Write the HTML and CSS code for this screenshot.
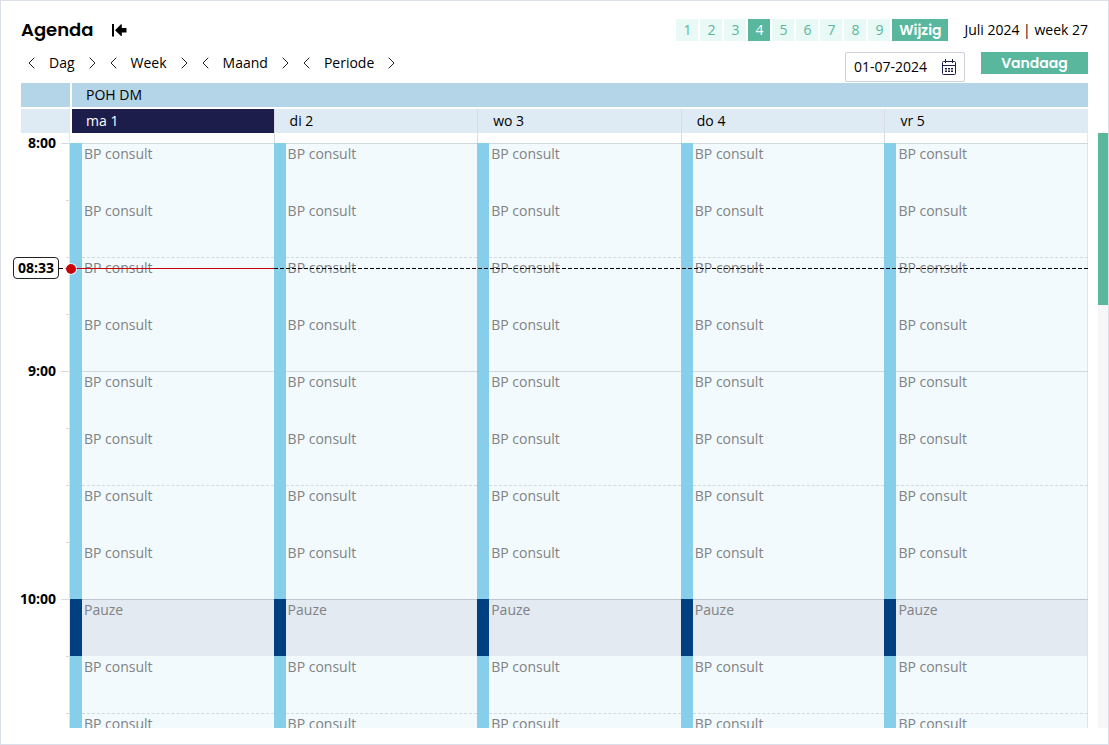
FILE: index.html
```html
<!DOCTYPE html>
<html lang="nl">
<head>
<meta charset="utf-8">
<meta name="viewport" content="width=device-width, initial-scale=1">
<title>Agenda</title>
<link rel="stylesheet" href="styles.css">
</head>
<body>
<main class="agenda">
  <header class="top">
    <div class="top-left">
      <div class="title-row">
        <h1 class="title">Agenda</h1>
        <button class="icon-button" type="button" aria-label="Paneel inklappen">
          <svg width="15" height="13" viewBox="0 0 15 13"><path d="M0 0h2v12.500H0z"/><path d="M3 6.200 9 .3h.8V4H14.500V8.500H9.800V12.100H9z"/></svg>
        </button>
      </div>
      <nav class="periods">
        <div class="period"><button class="step" type="button" aria-label="Vorige dag"><svg width="7" height="12" viewBox="0 0 7 12"><path d="M6.300 .7 1 6l5.300 5.300"/></svg></button><span>Dag</span><button class="step" type="button" aria-label="Volgende dag"><svg width="7" height="12" viewBox="0 0 7 12"><path d="M.7 .7 6 6 .7 11.300"/></svg></button></div>
        <div class="period"><button class="step" type="button" aria-label="Vorige week"><svg width="7" height="12" viewBox="0 0 7 12"><path d="M6.300 .7 1 6l5.300 5.300"/></svg></button><span>Week</span><button class="step" type="button" aria-label="Volgende week"><svg width="7" height="12" viewBox="0 0 7 12"><path d="M.7 .7 6 6 .7 11.300"/></svg></button></div>
        <div class="period"><button class="step" type="button" aria-label="Vorige maand"><svg width="7" height="12" viewBox="0 0 7 12"><path d="M6.300 .7 1 6l5.300 5.300"/></svg></button><span>Maand</span><button class="step" type="button" aria-label="Volgende maand"><svg width="7" height="12" viewBox="0 0 7 12"><path d="M.7 .7 6 6 .7 11.300"/></svg></button></div>
        <div class="period"><button class="step" type="button" aria-label="Vorige periode"><svg width="7" height="12" viewBox="0 0 7 12"><path d="M6.300 .7 1 6l5.300 5.300"/></svg></button><span>Periode</span><button class="step" type="button" aria-label="Volgende periode"><svg width="7" height="12" viewBox="0 0 7 12"><path d="M.7 .7 6 6 .7 11.300"/></svg></button></div>
      </nav>
    </div>
    <div class="top-right">
      <div class="views-row">
        <div class="views">
          <button class="view" type="button">1</button>
          <button class="view" type="button">2</button>
          <button class="view" type="button">3</button>
          <button class="view view-active" type="button">4</button>
          <button class="view" type="button">5</button>
          <button class="view" type="button">6</button>
          <button class="view" type="button">7</button>
          <button class="view" type="button">8</button>
          <button class="view" type="button">9</button>
          <button class="solid edit" type="button">Wijzig</button>
        </div>
        <span>Juli 2024 | week 27</span>
      </div>
      <div class="date-row">
        <div class="date">
          <input class="date-input" type="text" value="01-07-2024" aria-label="Datum">
          <button class="icon-button" type="button" aria-label="Kalender">
            <svg class="calendar" width="14" height="16" viewBox="0 0 14 16"><rect x=".5" y="2.500" width="13" height="13" rx="1"/><path d="M3.500 0v4M10.500 0v4M.5 6.500h13"/><path class="dots" d="M3 9h2v1.500H3zM6 9h2v1.500H6zM9 9h2v1.500H9zM3 11.500h2V13H3zM6 11.500h2V13H6zM9 11.500h2V13H9z"/></svg>
          </button>
        </div>
        <button class="solid today" type="button">Vandaag</button>
      </div>
    </div>
  </header>

  <div class="head">
    <div class="head-corner head-group"></div>
    <div class="group-name">POH DM</div>
    <div class="head-corner head-days"></div>
    <div class="days">
      <div class="day day-active">ma 1</div>
      <div class="day">di 2</div>
      <div class="day">wo 3</div>
      <div class="day">do 4</div>
      <div class="day">vr 5</div>
    </div>
  </div>

  <div class="body">
    <div class="gutter">
      <div class="hour"><time class="hour-name">8:00</time><div class="ticks"><i></i><i></i><i></i><i></i></div></div>
      <div class="hour"><time class="hour-name">9:00</time><div class="ticks"><i></i><i></i><i></i><i></i></div></div>
      <div class="hour"><time class="hour-name">10:00</time><div class="ticks"><i></i><i></i><i></i><i></i></div></div>
    </div>
    <div class="columns">
      <ul class="column">
        <li class="slot"><span>BP consult</span></li>
        <li class="slot"><span>BP consult</span></li>
        <li class="slot"><span>BP consult</span></li>
        <li class="slot"><span>BP consult</span></li>
        <li class="slot"><span>BP consult</span></li>
        <li class="slot"><span>BP consult</span></li>
        <li class="slot"><span>BP consult</span></li>
        <li class="slot"><span>BP consult</span></li>
        <li class="slot break"><span>Pauze</span></li>
        <li class="slot"><span>BP consult</span></li>
        <li class="slot"><span>BP consult</span></li>
      </ul>
      <ul class="column">
        <li class="slot"><span>BP consult</span></li>
        <li class="slot"><span>BP consult</span></li>
        <li class="slot"><span>BP consult</span></li>
        <li class="slot"><span>BP consult</span></li>
        <li class="slot"><span>BP consult</span></li>
        <li class="slot"><span>BP consult</span></li>
        <li class="slot"><span>BP consult</span></li>
        <li class="slot"><span>BP consult</span></li>
        <li class="slot break"><span>Pauze</span></li>
        <li class="slot"><span>BP consult</span></li>
        <li class="slot"><span>BP consult</span></li>
      </ul>
      <ul class="column">
        <li class="slot"><span>BP consult</span></li>
        <li class="slot"><span>BP consult</span></li>
        <li class="slot"><span>BP consult</span></li>
        <li class="slot"><span>BP consult</span></li>
        <li class="slot"><span>BP consult</span></li>
        <li class="slot"><span>BP consult</span></li>
        <li class="slot"><span>BP consult</span></li>
        <li class="slot"><span>BP consult</span></li>
        <li class="slot break"><span>Pauze</span></li>
        <li class="slot"><span>BP consult</span></li>
        <li class="slot"><span>BP consult</span></li>
      </ul>
      <ul class="column">
        <li class="slot"><span>BP consult</span></li>
        <li class="slot"><span>BP consult</span></li>
        <li class="slot"><span>BP consult</span></li>
        <li class="slot"><span>BP consult</span></li>
        <li class="slot"><span>BP consult</span></li>
        <li class="slot"><span>BP consult</span></li>
        <li class="slot"><span>BP consult</span></li>
        <li class="slot"><span>BP consult</span></li>
        <li class="slot break"><span>Pauze</span></li>
        <li class="slot"><span>BP consult</span></li>
        <li class="slot"><span>BP consult</span></li>
      </ul>
      <ul class="column">
        <li class="slot"><span>BP consult</span></li>
        <li class="slot"><span>BP consult</span></li>
        <li class="slot"><span>BP consult</span></li>
        <li class="slot"><span>BP consult</span></li>
        <li class="slot"><span>BP consult</span></li>
        <li class="slot"><span>BP consult</span></li>
        <li class="slot"><span>BP consult</span></li>
        <li class="slot"><span>BP consult</span></li>
        <li class="slot break"><span>Pauze</span></li>
        <li class="slot"><span>BP consult</span></li>
        <li class="slot"><span>BP consult</span></li>
      </ul>
    </div>
    <div class="scroll"><div class="scroll-thumb"></div></div>
    <div class="now">
      <time class="now-time">08:33</time>
      <div class="now-lead"></div>
      <div class="now-line"><div class="now-today"></div><div class="now-rest"></div></div>
    </div>
  </div>
</main>
</body>
</html>
```
FILE: styles.css
```css
* { box-sizing: border-box; }

body {
  margin: 0;
  font: 14px/20px "Open Sans", "Noto Sans", sans-serif;
  color: #000;
  background: #fff;
}

button, input { font: inherit; color: inherit; margin: 0; padding: 0; border: 0; background: none; }
button { cursor: pointer; }
svg { display: block; }

.agenda {
  height: 100vh;
  display: flex;
  flex-direction: column;
  padding-bottom: 16px;
  border: 1px solid #dbdfe9;
}

.top {
  display: flex;
  justify-content: space-between;
  padding: 18px 20px 1px;
}
.title-row { display: flex; align-items: center; gap: 18px; height: 22px; }
.title {
  margin: 0;
  font: 600 18px/22px Poppins, Inter, sans-serif;
}
.periods { display: flex; gap: 14px; padding: 12px 7px 0; }
.period { display: flex; align-items: center; gap: 14px; }
.step svg { fill: none; stroke: #222; stroke-width: 1; }

.top-right { display: flex; flex-direction: column; gap: 11px; }
.views-row { display: flex; justify-content: flex-end; align-items: center; gap: 16px; }
.views { display: flex; gap: 2px; }
.view {
  width: 22px;
  height: 22px;
  font-weight: 500;
  color: #58b79d;
  background: #e9f9f6;
}
.view-active { color: #fff; background: #58b79d; }
.solid {
  height: 22px;
  font: 600 14px/22px Poppins, Inter, sans-serif;
  color: #fff;
  background: #58b79d;
}
.edit { width: 56px; }
.today { width: 107px; }
.date-row { display: flex; justify-content: flex-end; gap: 16px; }
.date {
  display: flex;
  align-items: center;
  justify-content: space-between;
  width: 120px;
  height: 30px;
  padding: 0 8px;
  border: 1px solid #ccd0dd;
  border-radius: 2px;
}
.date-input { width: 80px; }
.calendar { fill: none; stroke: #1d1d4b; }
.calendar .dots { fill: #1d1d4b; stroke: none; }

.head {
  display: grid;
  grid-template-columns: 49px 1fr;
  grid-auto-rows: 24px;
  row-gap: 2px;
  margin: 0 20px;
  line-height: 24px;
}
.head-group, .group-name { background: #b4d4e8; }
.head-days { background: #deebf5; }
.group-name { border-left: 2px solid #fff; padding-left: 14px; }
.days { display: grid; grid-template-columns: repeat(5, 1fr); }
.day { padding-left: 15px; border-left: 1px solid #d8dce0; background: #deebf5; }
.day-active {
  padding-left: 14px;
  border-left: 2px solid #fff;
  color: #fff;
  background: #1d1d4b;
}

.body {
  position: relative;
  flex: 1;
  min-height: 0;
  display: grid;
  grid-template-columns: 49px 1fr 10px;
  grid-template-rows: 100%;
  padding-left: 20px;
  overflow: hidden;
}
.gutter { padding-top: 10px; border-right: 1px solid #e3e3e3; }
.hour { display: flex; justify-content: flex-end; gap: 5px; height: 228px; }
.hour-name { margin-top: -10px; font-weight: 700; }
.ticks { width: 8px; display: flex; flex-direction: column; align-items: flex-end; }
.ticks i { width: 3px; height: 57px; border-top: 1px solid #d8dcdc; }
.ticks i:first-child { width: 8px; }

.columns {
  display: grid;
  grid-template-columns: repeat(5, 1fr);
  grid-template-rows: 100%;
  margin-right: 10px;
}
.column {
  margin: 0;
  padding: 10px 0 0;
  list-style: none;
  box-shadow: inset 1px 0 #d8dcdc;
}
.column:first-child { box-shadow: none; }
.column:last-child { box-shadow: inset 1px 0 #d8dcdc, inset -1px 0 #e3e8ea; }
.slot { display: flex; height: 57px; background: #f2fafd; color: #808284; }
.slot::before { content: ""; width: 12px; background: #87ceeb; }
.slot span { flex: 1; padding-left: 2px; border-top: 1px solid transparent; }
.slot:nth-child(4n+1) span { border-top-color: #d0d9db; }
.slot:nth-child(4n+3) span { border-top: 1px dashed #d3dadc; }
.column:last-child .slot { box-shadow: inset -1px 0 #dde5e8; }
.break { background: #e3eaf2; }
.break::before { background: #004080; }
.slot.break:nth-child(4n+1) span { border-top-color: #bfc7d1; }

.scroll { background: #f7f7f7; }
.scroll-thumb { height: 172px; background: #58b79d; }

/* Current time marker, laid over the slots */
.now {
  position: absolute;
  top: 124px;
  left: 12px;
  right: 20px;
  display: flex;
  align-items: center;
}
.now-time {
  width: 46px;
  height: 22px;
  border: 1px solid #222;
  border-radius: 4px;
  text-align: center;
  font-weight: 700;
  background: #fff;
}
.now-lead { width: 11px; }
.now-line { position: relative; flex: 1; display: grid; grid-template-columns: 1fr 4fr; }
.now-line::before {
  content: "";
  position: absolute;
  top: -5px;
  left: -5px;
  width: 10px;
  height: 10px;
  border: 1px solid #ffffffb0;
  border-radius: 50%;
  background: #c90008 padding-box;
}
.now-today { height: 1px; background: #c90008; }
.now-lead, .now-rest {
  height: 1px;
  background: repeating-linear-gradient(90deg, #000 0 4px, transparent 4px 6px);
}
```
